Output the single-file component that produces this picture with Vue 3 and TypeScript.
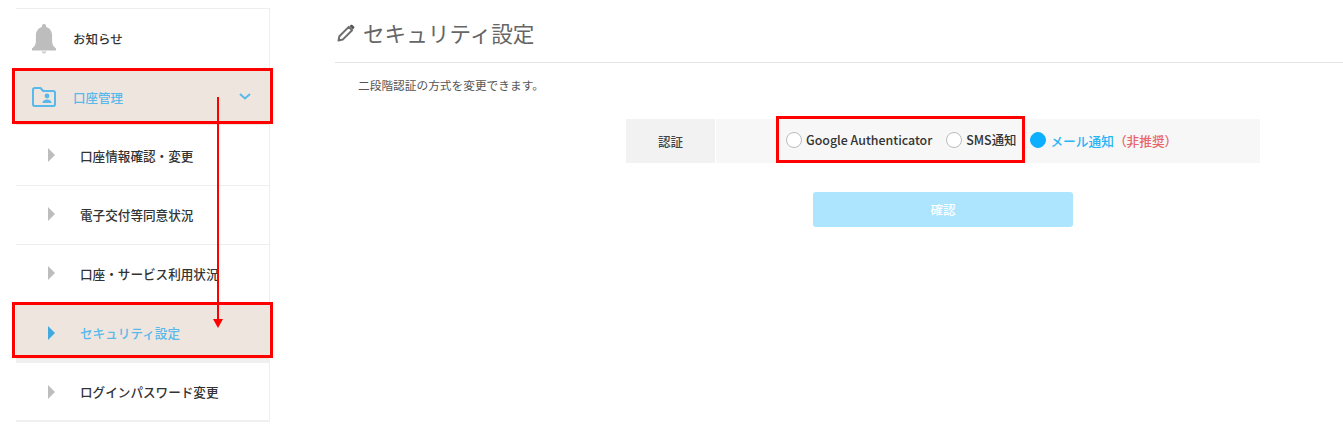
<script setup lang="ts">
const subItems = [
  { label: '口座情報確認・変更', active: false },
  { label: '電子交付等同意状況', active: false },
  { label: '口座・サービス利用状況', active: false },
  { label: 'セキュリティ設定', active: true },
  { label: 'ログインパスワード変更', active: false },
]

const options = [
  { label: 'Google Authenticator', checked: false },
  { label: 'SMS通知', checked: false },
  { label: 'メール通知', note: '（非推奨）', checked: true },
]
</script>

<template>
  <div class="page">
    <aside class="sidebar">
      <div class="nav-row notice">
        <svg class="nav-icon" width="24" height="30" viewBox="0 0 24 30">
          <path fill="#bdbdbd" d="M12 0c1.300 0 2.100.9 2.100 2.100v1c3.900 1 6 4.500 6 8.800v5.500c0 3 1.500 5 3.900 7v2.100H0v-2.100c2.400-2 3.900-4 3.900-7v-5.500c0-4.300 2.100-7.800 6-8.800v-1C9.900.9 10.700 0 12 0z" />
          <path fill="#d4d4d4" d="M9.600 27.200h4.800c-.2 1.500-1.100 2.500-2.400 2.500s-2.200-1-2.400-2.500z" />
        </svg>
        <span>お知らせ</span>
      </div>

      <div class="nav-row account">
        <svg class="nav-icon" width="24" height="20" viewBox="0 0 24 20">
          <path fill="none" stroke="#58b9ea" stroke-width="2" stroke-linejoin="round" d="M1 2.800C1 1.700 1.700 1 2.800 1h5.700l2.700 3h10c1.100 0 1.800.7 1.800 1.800v11.400c0 1.100-.7 1.800-1.800 1.800H2.800C1.700 19 1 18.300 1 17.200z" />
          <circle cx="15" cy="9" r="2.400" fill="#58b9ea" />
          <path fill="#58b9ea" d="M10.400 16c0-2.200 2-3.400 4.600-3.400s4.600 1.200 4.600 3.400z" />
        </svg>
        <span class="account-label">口座管理</span>
        <svg class="chevron" width="12" height="7" viewBox="0 0 12 7">
          <path fill="none" stroke="#58b9ea" stroke-width="2" d="M1 1l5 4.500L11 1" />
        </svg>
      </div>

      <ul class="sub-list">
        <li v-for="item in subItems" :key="item.label" :class="{ active: item.active }">
          <i class="caret"></i>
          <span>{{ item.label }}</span>
        </li>
      </ul>
    </aside>

    <main class="content">
      <h1 class="title">
        <svg width="18" height="18" viewBox="0 0 18 18">
          <path fill="none" stroke="#6e6e6e" stroke-width="2" stroke-linejoin="round" d="M1.500 16.500l.9-4.200L11.800 2.900l3.300 3.300-9.400 9.400z" />
          <path fill="#555" d="M12.600 2.100l1.100-1.100c.5-.5 1.200-.5 1.700 0l1.600 1.600c.5.500.5 1.200 0 1.700l-1.100 1.100z" />
        </svg>
        <span>セキュリティ設定</span>
      </h1>
      <p class="lead">二段階認証の方式を変更できます。</p>

      <div class="form-row">
        <div class="form-label">認証</div>
        <div class="form-value">
          <label v-for="opt in options" :key="opt.label" class="radio" :class="{ checked: opt.checked }">
            <i class="dot"></i>
            <span>{{ opt.label }}</span><em v-if="opt.note">{{ opt.note }}</em>
          </label>
        </div>
      </div>

      <div class="actions">
        <button type="button" class="confirm" disabled>確認</button>
      </div>
    </main>

    <!-- annotations drawn on top of the screen capture -->
    <div class="mark mark-account"></div>
    <div class="mark mark-security"></div>
    <div class="mark mark-radio"></div>
    <div class="arrow"></div>
  </div>
</template>

<style>
html,
body {
  margin: 0;
  background: #fff;
}
</style>

<style scoped>
.page {
  position: relative;
  display: flex;
  width: 1343px;
  height: 440px;
  overflow: hidden;
  box-sizing: border-box;
  padding: 8px 0 0 16px;
  font-family: "Noto Sans CJK JP", "Noto Sans", sans-serif;
  color: #333;
}

.sidebar {
  flex: none;
  width: 254px;
  height: 414px;
  box-sizing: border-box;
  border-top: 1px solid #eee;
  border-right: 1px solid #eee;
  border-bottom: 2px solid #f0f0f0;
}

.nav-row {
  display: flex;
  align-items: center;
  font-size: 12.500px;
  font-weight: 500;
}

.notice {
  height: 59px;
  padding-left: 16px;
  gap: 17px;
}

.account {
  height: 57px;
  padding-left: 16px;
  gap: 17px;
  background: #efe5df;
  color: #58b9ea;
}

.account-label {
  margin-top: 2px;
}

.chevron {
  margin-left: auto;
  margin-right: 18px;
}

.sub-list {
  list-style: none;
  margin: 0;
  padding: 2px 0 0;
}

.sub-list li {
  display: flex;
  align-items: center;
  height: 59px;
  box-sizing: border-box;
  padding: 0 0 2px 32px;
  gap: 25px;
  font-size: 12.600px;
  font-weight: 500;
  border-bottom: 1px solid #eee;
}

.sub-list li:last-child {
  border-bottom: 0;
}

.sub-list li.active {
  background: #efe5df;
  color: #58b9ea;
  border-bottom: 0;
  box-shadow: inset 0 -4px 0 #f0f0f0;
}

.caret {
  width: 0;
  height: 0;
  border-style: solid;
  border-width: 7px 0 7px 7px;
  border-color: transparent transparent transparent #bdbdbd;
}

.active .caret {
  border-left-color: #3fa9e0;
}

.content {
  flex: 1;
  min-width: 0;
  margin-left: 65px;
}

.title {
  display: flex;
  align-items: center;
  gap: 8px;
  height: 55px;
  margin: 0;
  padding-left: 2px;
  box-sizing: border-box;
  padding-bottom: 5px;
  border-bottom: 1px solid #e3e3e3;
  font-size: 21.600px;
  font-weight: 400;
  color: #666;
}

.lead {
  margin: 14px 0 0 23px;
  font-size: 11.700px;
  line-height: 16px;
  color: #555;
}

.form-row {
  display: flex;
  gap: 1px;
  height: 44px;
  margin: 26px 83px 0 291px;
}

.form-label {
  flex: none;
  display: flex;
  align-items: center;
  justify-content: center;
  width: 89px;
  background: #f2f2f2;
  font-size: 12.500px;
  font-weight: 500;
  color: #444;
}

.form-value {
  flex: 1;
  display: flex;
  align-items: center;
  gap: 14px;
  padding-left: 70px;
  padding-bottom: 2px;
  background: #f7f7f7;
}

.radio {
  display: flex;
  align-items: center;
  font-size: 12.400px;
  font-weight: 500;
  color: #333;
}

.radio .dot {
  width: 16px;
  height: 16px;
  box-sizing: border-box;
  margin-right: 4px;
  border: 1px solid #bbb;
  border-radius: 50%;
  background: #fff;
}

.radio.checked {
  font-size: 12.700px;
  color: #25b4f5;
}

.radio.checked .dot {
  border-color: #0cb0ff;
  background: #0cb0ff;
}

.radio em {
  font-style: normal;
  color: #e8656a;
}

.actions {
  display: flex;
  justify-content: center;
  margin: 29px 83px 0 291px;
}

.confirm {
  width: 260px;
  height: 35px;
  border: 0;
  border-radius: 3px;
  background: #ade5ff;
  color: #fff;
  font: 500 12.500px "Noto Sans CJK JP", sans-serif;
}

.mark {
  position: absolute;
  box-sizing: border-box;
  border: 3px solid #f00;
}

.mark-account {
  left: 12px;
  top: 68px;
  width: 261px;
  height: 56px;
}

.mark-security {
  left: 12px;
  top: 302px;
  width: 261px;
  height: 56px;
}

.mark-radio {
  left: 776px;
  top: 116px;
  width: 249px;
  height: 47px;
}

.arrow {
  position: absolute;
  left: 217px;
  top: 97px;
  width: 2px;
  height: 222px;
  background: #f00;
}

.arrow::after {
  content: "";
  position: absolute;
  left: -4px;
  bottom: -9px;
  border-style: solid;
  border-width: 9px 5px 0;
  border-color: #f00 transparent transparent;
}
</style>
